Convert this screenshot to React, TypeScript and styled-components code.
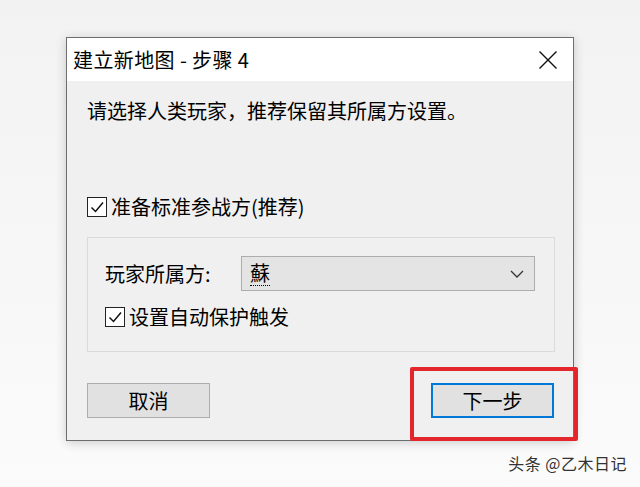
import React from 'react'
import styled, { createGlobalStyle } from 'styled-components'

const GlobalStyle = createGlobalStyle`
  html, body {
    margin: 0;
    padding: 0;
    background: #f6f6f6;
  }
  body {
    font-family: "Noto Sans CJK SC", "Noto Sans", sans-serif;
    color: #000;
  }
`

const Page = styled.div`
  position: relative;
  width: 640px;
  height: 487px;
  overflow: hidden;
  background: linear-gradient(#f2f2f2, #fbfbfb);
  padding: 37px 0 0 66px;
  box-sizing: border-box;
`

const Dialog = styled.div`
  width: 508px;
  height: 404px;
  box-sizing: border-box;
  border: 1px solid #6e6e6e;
  background: #f0f0f0;
  box-shadow: 0 2px 10px rgba(0, 0, 0, 0.18);
  display: flex;
  flex-direction: column;
`

const TitleBar = styled.div`
  height: 43px;
  background: #ffffff;
  display: flex;
  align-items: center;
  justify-content: space-between;
  padding: 0 14px 0 6px;
  font-size: 20px;
`

const Title = styled.span`
  white-space: pre;
  letter-spacing: 0.4px;
`

const CloseButton = styled.div`
  width: 22px;
  height: 22px;
  display: flex;
  align-items: center;
  justify-content: center;
`

const Body = styled.div`
  flex: 1;
  display: flex;
  flex-direction: column;
  padding: 0 18px 0 20px;
`

const Intro = styled.div`
  font-size: 20px;
  line-height: 28px;
  margin-top: 16px;
`

const CheckRow = styled.div<{ $top: number }>`
  display: flex;
  align-items: center;
  gap: 4px;
  margin-top: ${p => p.$top}px;
  font-size: 20px;
  line-height: 24px;
`

const Box = styled.div`
  width: 18px;
  height: 18px;
  border: 1.5px solid #222;
  background: #fff;
  display: flex;
  align-items: center;
  justify-content: center;
`

const Group = styled.div`
  margin-top: 18px;
  height: 115px;
  box-sizing: border-box;
  border: 1px solid #dadada;
  padding: 18px 19px 0 17px;
  display: flex;
  flex-direction: column;
`

const FieldRow = styled.div`
  display: flex;
  align-items: center;
  justify-content: space-between;
  font-size: 20px;
`

const Select = styled.div`
  width: 294px;
  height: 35px;
  box-sizing: border-box;
  border: 1px solid #adadad;
  background: #e4e4e4;
  display: flex;
  align-items: center;
  justify-content: space-between;
  padding: 0 10px 0 8px;
  font-size: 20px;
`

const Focused = styled.span`
  border-bottom: 1px dotted #000;
  line-height: 24px;
`

const Buttons = styled.div`
  display: flex;
  justify-content: space-between;
  margin-top: 31px;
  padding-right: 1px;
`

const Button = styled.div<{ $primary?: boolean }>`
  width: 123px;
  height: 35px;
  box-sizing: border-box;
  border: ${p => (p.$primary ? '2px solid #0078d7' : '1px solid #adadad')};
  background: #e1e1e1;
  display: flex;
  align-items: center;
  justify-content: center;
  font-size: 20px;
`

const Highlight = styled.div`
  position: absolute;
  left: 410px;
  top: 367px;
  width: 168px;
  height: 74px;
  box-sizing: border-box;
  border: 4px solid #e3262b;
  border-radius: 2px;
`

const Watermark = styled.div`
  position: absolute;
  right: 13px;
  bottom: 12px;
  font-size: 16px;
  color: #333;
  letter-spacing: 0.5px;
  text-shadow: 0 0 2px #fff;
`

const Check = () => (
  <Box>
    <svg width="16" height="16" viewBox="0 0 16 16">
      <polyline points="2.5,8.5 6.5,12.5 14,3.5" fill="none" stroke="#111" strokeWidth="1.5" />
    </svg>
  </Box>
)

export default function App() {
  return (
    <>
      <GlobalStyle />
      <Page>
        <Dialog>
          <TitleBar>
            <Title>建立新地图 - 步骤 4</Title>
            <CloseButton>
              <svg width="20" height="20" viewBox="0 0 20 20">
                <path d="M1.5 1.5 L18.5 18.5 M18.5 1.5 L1.5 18.5" stroke="#111" strokeWidth="1.4" />
              </svg>
            </CloseButton>
          </TitleBar>
          <Body>
            <Intro>请选择人类玩家，推荐保留其所属方设置。</Intro>
            <CheckRow $top={70}>
              <Check />
              <span>准备标准参战方(推荐)</span>
            </CheckRow>
            <Group>
              <FieldRow>
                <span>玩家所属方:</span>
                <Select>
                  <Focused>蘇</Focused>
                  <svg width="14" height="8" viewBox="0 0 14 8">
                    <polyline points="1,1 7,7 13,1" fill="none" stroke="#333" strokeWidth="1.3" />
                  </svg>
                </Select>
              </FieldRow>
              <CheckRow $top={14}>
                <Check />
                <span>设置自动保护触发</span>
              </CheckRow>
            </Group>
            <Buttons>
              <Button>取消</Button>
              <Button $primary>下一步</Button>
            </Buttons>
          </Body>
        </Dialog>
        <Highlight />
        <Watermark>头条 @乙木日记</Watermark>
      </Page>
    </>
  )
}
